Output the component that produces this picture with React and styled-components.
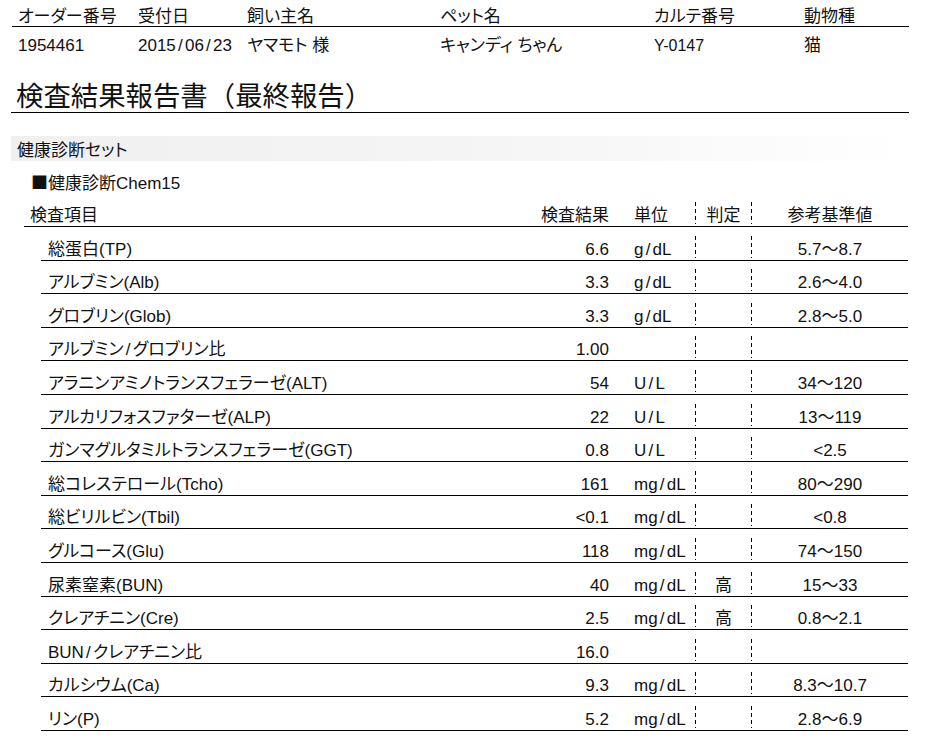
import React from "react";
import styled, { createGlobalStyle } from "styled-components";

const Global = createGlobalStyle`
  html, body { margin: 0; padding: 0; background: #fff; }
  body {
    font-family: "Liberation Sans", "Noto Sans CJK JP", sans-serif;
    color: #111;
    font-size: 17px;
    -webkit-font-smoothing: antialiased;
  }
`;

const Page = styled.div`
  width: 898px;
  margin-left: 11px;
  font-feature-settings: "palt" 1;
`;

const InfoRow = styled.div`
  display: grid;
  grid-template-columns: 120px 109px 193px 214px 150px 1fr;
  margin-left: 1px;
  box-sizing: border-box;
  height: ${(p) => (p.$head ? "27px" : "34px")};
  align-items: ${(p) => (p.$head ? "end" : "center")};
  padding-top: ${(p) => (p.$head ? "0" : "3px")};
  border-bottom: ${(p) => (p.$head ? "1px solid #000" : "none")};
`;

const InfoCell = styled.div`
  padding-left: 6px;
  line-height: 18px;
  font-size: ${(p) => (p.$small ? "16px" : "17px")};
  white-space: nowrap;
`;

const Title = styled.h1`
  margin: 0;
  height: 52px;
  box-sizing: border-box;
  border-bottom: 1px solid #000;
  display: flex;
  align-items: flex-end;
  padding: 0 0 0 5px;
  font-size: 27.4px;
  line-height: 31px;
  font-weight: normal;
  font-feature-settings: normal;
  text-spacing-trim: space-all;
  white-space: nowrap;
`;

const SectionBand = styled.div`
  margin-top: 23px;
  height: 25px;
  box-sizing: border-box;
  padding: 4px 0 0 6px;
  line-height: 21px;
  background: linear-gradient(
    to right,
    #f0f0f0 0%,
    #f3f3f3 40%,
    #f8f8f8 70%,
    #fdfdfd 90%,
    #ffffff 100%
  );
`;

const SubTitle = styled.div`
  margin-top: 12px;
  height: 22px;
  line-height: 22px;
  padding-left: 20px;
  white-space: nowrap;
`;

const Square = styled.span`
  font-family: "Noto Sans CJK JP", sans-serif;
  font-feature-settings: normal;
  line-height: 1;
`;

const Table = styled.div`
  margin-left: 13px;
  width: 884px;
`;

const Row = styled.div`
  display: grid;
  grid-template-columns: 1fr 100px 81px 57px 156px;
  box-sizing: border-box;
  height: ${(p) => (p.$head ? "32px" : "33.6px")};
  margin-left: ${(p) => (p.$head ? "0" : "17px")};
  border-bottom: 1px solid #000;
  align-items: end;
  padding-bottom: 2px;
`;

const Cell = styled.div`
  height: 22px;
  line-height: 28px;
  white-space: nowrap;
  text-align: ${(p) => p.$align || "left"};
  padding-left: ${(p) => p.$pl || "0"};
  padding-right: ${(p) => p.$pr || "0"};
`;

const JudgeCell = styled(Cell)`
  text-align: center;
  background-image: repeating-linear-gradient(
      to bottom,
      #000 0 4px,
      transparent 4px 7px
    ),
    repeating-linear-gradient(to bottom, #000 0 4px, transparent 4px 7px);
  background-size: 1px 100%, 1px 100%;
  background-position: left top, right top;
  background-repeat: no-repeat;
`;

const Slash = styled.span`
  padding: 0 0.13em;
`;

const withSlash = (text) => {
  const parts = String(text).split("/");
  return parts.map((p, i) => (
    <React.Fragment key={i}>
      {i > 0 && <Slash>/</Slash>}
      {p}
    </React.Fragment>
  ));
};

const info = [
  ["オーダー番号", "1954461"],
  ["受付日", "2015/06/23"],
  ["飼い主名", "ヤマモト 様"],
  ["ペット名", "キャンディ ちゃん"],
  ["カルテ番号", "Y-0147", true],
  ["動物種", "猫"],
];

const rows = [
  ["総蛋白(TP)", "6.6", "g/dL", "", "5.7～8.7"],
  ["アルブミン(Alb)", "3.3", "g/dL", "", "2.6～4.0"],
  ["グロブリン(Glob)", "3.3", "g/dL", "", "2.8～5.0"],
  ["アルブミン/グロブリン比", "1.00", "", "", ""],
  ["アラニンアミノトランスフェラーゼ(ALT)", "54", "U/L", "", "34～120"],
  ["アルカリフォスファターゼ(ALP)", "22", "U/L", "", "13～119"],
  ["ガンマグルタミルトランスフェラーゼ(GGT)", "0.8", "U/L", "", "<2.5"],
  ["総コレステロール(Tcho)", "161", "mg/dL", "", "80～290"],
  ["総ビリルビン(Tbil)", "<0.1", "mg/dL", "", "<0.8"],
  ["グルコース(Glu)", "118", "mg/dL", "", "74～150"],
  ["尿素窒素(BUN)", "40", "mg/dL", "高", "15～33"],
  ["クレアチニン(Cre)", "2.5", "mg/dL", "高", "0.8～2.1"],
  ["BUN/クレアチニン比", "16.0", "", "", ""],
  ["カルシウム(Ca)", "9.3", "mg/dL", "", "8.3～10.7"],
  ["リン(P)", "5.2", "mg/dL", "", "2.8～6.9"],
];

export default function App() {
  return (
    <>
      <Global />
      <Page>
        <InfoRow $head>
          {info.map(([label]) => (
            <InfoCell key={label}>{label}</InfoCell>
          ))}
        </InfoRow>
        <InfoRow>
          {info.map(([label, value, small]) => (
            <InfoCell key={label} $small={small}>
              {withSlash(value)}
            </InfoCell>
          ))}
        </InfoRow>

        <Title>検査結果報告書（最終報告）</Title>

        <SectionBand>健康診断セット</SectionBand>
        <SubTitle>
          <Square>■</Square>健康診断Chem15
        </SubTitle>

        <Table>
          <Row $head>
            <Cell $pl="6px">検査項目</Cell>
            <Cell $align="right" $pr="5px">
              検査結果
            </Cell>
            <Cell $pl="20px">単位</Cell>
            <JudgeCell>判定</JudgeCell>
            <Cell $align="center">参考基準値</Cell>
          </Row>
          {rows.map(([name, result, unit, judge, ref]) => (
            <Row key={name}>
              <Cell $pl="7px">{withSlash(name)}</Cell>
              <Cell $align="right" $pr="5px">
                {result}
              </Cell>
              <Cell $pl="20px">{withSlash(unit)}</Cell>
              <JudgeCell>{judge}</JudgeCell>
              <Cell $align="center">{ref}</Cell>
            </Row>
          ))}
        </Table>
      </Page>
    </>
  );
}
